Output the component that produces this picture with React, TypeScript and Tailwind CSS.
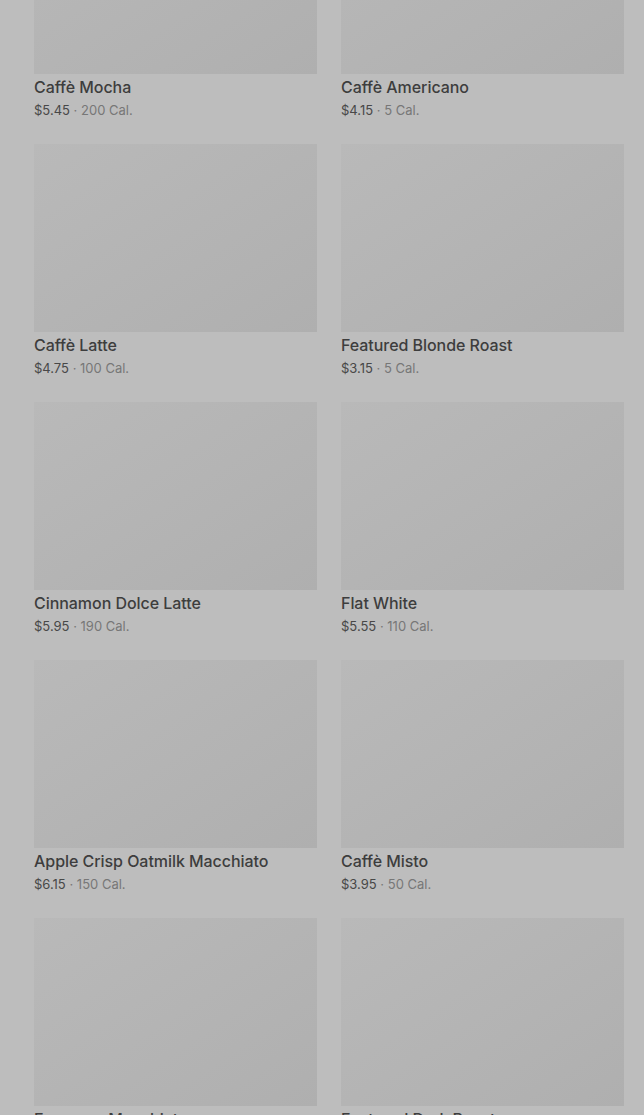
const items = [
  { name: 'Caffè Mocha', price: '$5.45', cal: '200 Cal.' },
  { name: 'Caffè Americano', price: '$4.15', cal: '5 Cal.' },
  { name: 'Caffè Latte', price: '$4.75', cal: '100 Cal.' },
  { name: 'Featured Blonde Roast', price: '$3.15', cal: '5 Cal.' },
  { name: 'Cinnamon Dolce Latte', price: '$5.95', cal: '190 Cal.' },
  { name: 'Flat White', price: '$5.55', cal: '110 Cal.' },
  { name: 'Apple Crisp Oatmilk Macchiato', price: '$6.15', cal: '150 Cal.' },
  { name: 'Caffè Misto', price: '$3.95', cal: '50 Cal.' },
  { name: 'Espresso Macchiato', price: '$3.25', cal: '15 Cal.' },
  { name: 'Featured Dark Roast', price: '$3.15', cal: '5 Cal.' },
];

export default function App() {
  return (
    <div className="h-[1115px] overflow-hidden bg-[#bdbdbd] font-['Inter','Liberation_Sans',sans-serif]">
      <div className="-mt-[114px] grid grid-cols-2 gap-x-6 gap-y-6 pl-[34px] pr-5">
        {items.map((item) => (
          <div key={item.name} className="flex flex-col">
            <div className="h-[188px] bg-gradient-to-br from-[#b9b9b9] via-[#b4b4b4] to-[#afafaf]" />
            <div className="mt-px text-[16px] leading-[25px] font-medium text-[#3d3d3d] tracking-[-0.05px]">
              {item.name}
            </div>
            <div className="text-[13px] leading-5 text-[#484848]">
              {item.price}
              <span className="text-[#777777]"> · {item.cal}</span>
            </div>
          </div>
        ))}
      </div>
    </div>
  );
}
